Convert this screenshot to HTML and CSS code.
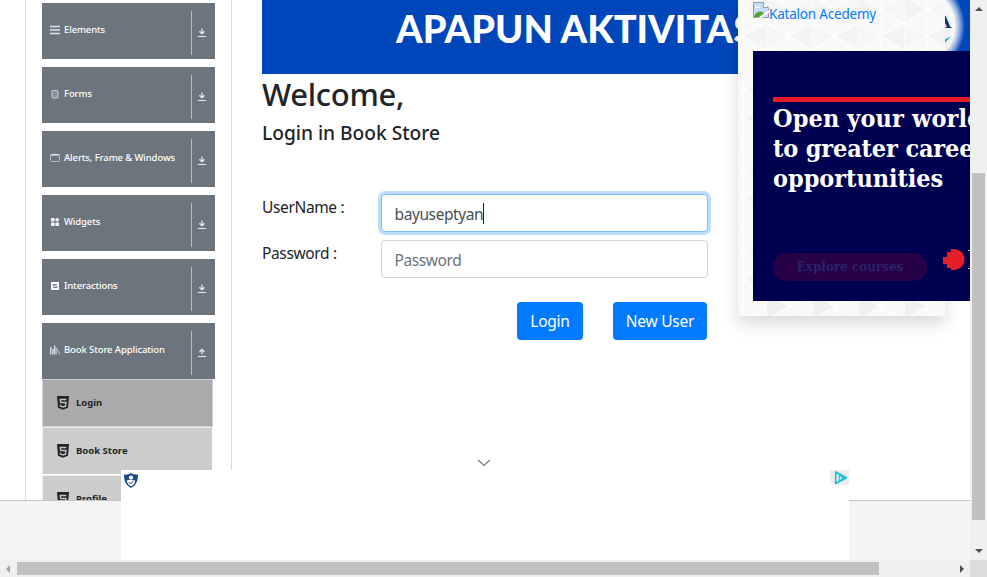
FILE: index.html
```html
<!DOCTYPE html>
<html lang="en">
<head>
<meta charset="utf-8">
<title>Book Store</title>
<link rel="stylesheet" href="styles.css">
</head>
<body>
<svg class="defs" width="0" height="0" aria-hidden="true">
  <symbol id="down" viewBox="0 0 8 9"><path d="M4 .5v5M1.400 3.300 4 5.800l2.600-2.500" fill="none" stroke="currentColor" stroke-width="1.300"/><path d="M0 8.500h8" stroke="currentColor" stroke-width="1"/></symbol>
  <symbol id="up" viewBox="0 0 8 9"><path d="M4 6.500V1.500M1.400 4 4 1.500 6.600 4" fill="none" stroke="currentColor" stroke-width="1.300"/><path d="M0 8.500h8" stroke="currentColor" stroke-width="1"/></symbol>
  <symbol id="html5" viewBox="0 0 12 14"><path d="M0 0h12l-1 11.800L6 13.700l-5-1.900z" fill="currentColor"/><path d="M9.400 3.500H3.300l.3 3h5.300l-.4 3.600-2.500.8-2.500-.8-.1-1.300" fill="none" stroke="#c4c4c4" stroke-width="1.400"/></symbol>
</svg>
<div class="viewport">
  <div class="page">
    <div class="content">
      <aside class="sidebar">
        <div class="group"><svg class="gi" viewBox="0 0 10 10"><path d="M0 1.500h10M0 5h10M0 8.500h10" stroke="#dfe1e3" stroke-width="1.600"/></svg><span class="gt">Elements</span><span class="arrow"><svg><use href="#down"/></svg></span></div>
        <div class="group"><svg class="gi" viewBox="0 0 10 10"><rect x="2" y="1.500" width="6" height="7.500" rx="1" fill="#8b9196" stroke="#cfd2d5"/></svg><span class="gt">Forms</span><span class="arrow"><svg><use href="#down"/></svg></span></div>
        <div class="group"><svg class="gi" viewBox="0 0 10 10"><rect x=".5" y="1.500" width="9" height="7" rx="1" fill="none" stroke="#b9bdc1"/><path d="M1 1.800h8" stroke="#e5e7e8" stroke-width="1.500"/></svg><span class="gt">Alerts, Frame &amp; Windows</span><span class="arrow"><svg><use href="#down"/></svg></span></div>
        <div class="group"><svg class="gi" viewBox="0 0 10 10"><path d="M1 1h3.600v3.600H1zM1 5.400h3.600V9H1zM5.400 5.400H9V9H5.400zM7.200.5l2.200 2.300-2.200 2.300L5 2.800z" fill="#f1f2f3"/></svg><span class="gt">Widgets</span><span class="arrow"><svg><use href="#down"/></svg></span></div>
        <div class="group"><svg class="gi" viewBox="0 0 10 10"><rect x="1" y="1" width="8" height="8" rx=".6" fill="#fff"/><path d="M3 5V3.500h4M7 5v1.500H3M3.500 5h3" stroke="#6c757d" stroke-width=".9" fill="none"/></svg><span class="gt">Interactions</span><span class="arrow"><svg><use href="#down"/></svg></span></div>
        <div class="group open"><svg class="gi" viewBox="0 0 10 10"><path d="M.7 2v7.500M3 4v5.500M4.800.5v9" stroke="#dcdfe1" stroke-width="1.400"/><path d="M3.200 1.500h2M6.300 2.500v7M7 4l2.700 5.500" stroke="#b5babe" stroke-width="1.100"/></svg><span class="gt">Book Store Application</span><span class="arrow"><svg><use href="#up"/></svg></span></div>
        <ul class="menu">
          <li class="item active"><svg><use href="#html5"/></svg><span>Login</span></li>
          <li class="item"><svg><use href="#html5"/></svg><span>Book Store</span></li>
          <li class="item"><svg><use href="#html5"/></svg><span>Profile</span></li>
        </ul>
      </aside>
      <main class="main">
        <div class="banner"><span class="slogan">APAPUN AKTIVITAS</span></div>
        <div class="logo"><span class="logo-a">A</span><span class="logo-tick"></span></div>
        <form class="form">
          <h2>Welcome,</h2>
          <h5>Login in Book Store</h5>
          <div class="row"><label>UserName :</label><div class="input focus"><span>bayuseptyan</span><i></i></div></div>
          <div class="row"><label>Password :</label><div class="input hint"><span>Password</span></div></div>
          <div class="buttons"><button type="button" class="b-login">Login</button><button type="button" class="b-new">New User</button></div>
        </form>
      </main>
    </div>
    <footer class="footer"></footer>
    <section class="panel">
      <svg class="facets" width="207" height="316">
        <defs><pattern id="tri" width="46" height="81" patternUnits="userSpaceOnUse" x="-18" y="-4">
          <rect width="46" height="81" fill="#f9f9f9"/>
          <path d="M0 0 23 13.500 0 27zM23 40.500 46 27v27z" fill="#f4f4f4"/>
          <path d="M0 54 23 67.500 0 81z" fill="#f0f0f0"/>
          <path d="M23 13.500 46 0v27zM0 27 23 40.500 0 54z" fill="#f6f6f6"/>
          <path d="M0 0v81M23 0v81M0 0 46 27M46 0 0 27M0 27 46 54M46 27 0 54M0 54 46 81M46 54 0 81" stroke="#fefefe" stroke-width="1.300"/>
        </pattern></defs>
        <rect width="207" height="316" fill="url(#tri)"/>
      </svg>
      <a class="katalon"><svg class="broken" viewBox="0 0 16 16"><path d="M.5.500h10l5 5v10H.5z" fill="#c9dcf7" stroke="#9b9b9b"/><path d="M10.500.500v5h5" fill="#fff" stroke="#9b9b9b"/><path d="M1 15c1-5 6-7 10-4l-4 4z" fill="#52a535"/><path d="M2 6c0-2 2-2 2.500-1C6 4 7 5 7 6z" fill="#fff"/><path d="m5 16 11-8v2.500L8.500 16z" fill="#fff"/><path d="M10 15.500h5.500V11" fill="none" stroke="#9b9b9b"/></svg><span>Katalon Acedemy</span></a>
      <div class="ad">
        <div class="rule"></div>
        <p class="headline"><span class="line-1">Open your world</span><span class="line-2">to greater career</span><span class="line-3">opportunities</span></p>
        <div class="cta"><span class="explore">Explore courses</span><svg class="burst" viewBox="0 0 27 22"><path d="M8 0h3a10.500 10.500 0 0 1 0 21H8v-2H4v-4H0V8h4V3h4z" fill="#e61e2a"/><path d="M25 1.500h3M25 19.500h3" stroke="#d5d5e5" fill="none"/></svg></div>
      </div>
    </section>
    <svg class="chevron" viewBox="0 0 14 8"><path d="m1 1 6 5.500L13 1" fill="none" stroke="#777" stroke-width="1.100"/></svg>
    <div class="bottom-ad">
      <svg class="shield" viewBox="0 0 14 15"><path d="M7 0c2 1.300 4 1.800 7 1.600C14 8 12 12.500 7 15 2 12.500 0 8 0 1.600 3 1.800 5 1.300 7 0z" fill="#184a80"/><circle cx="7" cy="4.500" r="2.100" fill="#fff"/><path d="M2.800 7.500C4 6.500 10 6.500 11.200 7.500 11 10.500 9.500 12 7 13.200 4.500 12 3 10.500 2.800 7.500z" fill="#fff"/><path d="m4.700 9 2 2 3-3.500" fill="none" stroke="#184a80"/></svg>
      <svg class="choices" viewBox="0 0 19 15"><path d="M0 0h19v15H3.500L0 12z" fill="#ececec"/><path d="M5.700 2v11.500L16.500 7.700z" fill="#ececec" stroke="#16bcdc" stroke-width="1.600" stroke-linejoin="round"/><path d="M9.200 11V5l4.300 2.700-3 1.700" fill="none" stroke="#16bcdc" stroke-width="1.100"/></svg>
    </div>
  </div>
  <div class="vbar"><svg class="tri-up" viewBox="0 0 8 4"><path d="M4 0 8 4H0z"/></svg><div class="vthumb"></div><svg class="tri-down" viewBox="0 0 8 4"><path d="M0 0h8L4 4z"/></svg></div>
  <div class="hbar"><svg class="tri-left" viewBox="0 0 4 8"><path d="M4 0v8L0 4z"/></svg><div class="hthumb"></div><svg class="tri-right" viewBox="0 0 4 8"><path d="M0 0v8l4-4z"/></svg></div>
  <div class="corner"></div>
</div>
</body>
</html>
```
FILE: styles.css
```css
* { box-sizing: border-box; }
body { margin: 0; overflow: hidden; color: #212529; background: #fff; font: 15.500px/24px "Noto Sans", "Open Sans", sans-serif; letter-spacing: -.4px; }
.defs { position: absolute; }
.viewport { display: grid; grid-template: 560px 17px / 970px 17px; width: 987px; height: 577px; }
.page { position: relative; overflow: hidden; }
.content { display: flex; height: 500px; overflow: hidden; }
.footer { height: 60px; background: #f4f4f4; border-top: 1px solid #c6c6c6; }

.sidebar { flex: none; width: 207px; margin-left: 25px; padding: 3px 16px 0; border: solid #ddd; border-width: 0 1px; letter-spacing: 0; }
.group { display: flex; align-items: flex-start; width: 173px; height: 56px; margin-bottom: 8px; padding: 8px 9px 0 8px; background: #6c757d; color: #fff; font-size: 9.500px; font-weight: 500; letter-spacing: -.11px; line-height: 38px; white-space: nowrap; }
.group.open { margin-bottom: 0; }
.gi { flex: none; width: 10px; height: 10px; margin: 14px 4px 0 0; }
.arrow { display: flex; flex: none; align-items: flex-start; width: 15px; height: 44px; margin-left: auto; padding: 17px 0 0 6px; border-left: 1px solid #b8bcc0; color: #e4e6e8; }
.arrow svg { flex: none; width: 8px; height: 9px; }
.menu { width: 171px; margin: 0; padding: 0; list-style: none; }
.item { display: flex; align-items: center; gap: 7px; width: 170px; height: 47px; margin-bottom: 1px; padding-left: 14px; background: #ccc; border: 1px solid #ccc; border-left-color: #f2f2f2; border-top-color: #eee; font-size: 9.500px; font-weight: 700; }
.item.active { width: 171px; height: 48px; margin-bottom: 0; background: #aaa; border-color: #cdd1d9; }
.item svg { width: 12px; height: 14px; }

.main { position: relative; flex: none; width: 738px; padding-left: 30px; }
.banner { height: 74px; overflow: hidden; background: #0046bb; color: #fff; white-space: nowrap; }
.slogan { display: block; margin: 5px 0 0 134px; font: 900 38px/46px Lato, sans-serif; letter-spacing: 0; }
.logo { position: absolute; left: 651px; top: -20px; width: 82px; height: 92px; border-radius: 50%; background: radial-gradient(closest-side, #fff 74%, rgba(255,255,255,.6) 86%, rgba(255,255,255,0)); }
.logo-a { position: absolute; left: 55px; top: 30px; color: #123775; font: 700 17px/24px "DejaVu Serif", serif; }
.logo-tick { position: absolute; left: 59px; top: 56px; width: 9px; height: 7px; background: #0faee0; clip-path: polygon(0 40%, 35% 50%, 100% 0, 30% 100%, 0 100%); }
.form { width: 446px; }
h2 { margin: 1px 0 9px; font-size: 31px; line-height: 38px; font-weight: 500; letter-spacing: -.3px; }
h5 { margin: 0 0 49px; font-size: 19.200px; line-height: 22px; padding-bottom: 2px; font-weight: 500; letter-spacing: -.02px; }
.row { display: flex; align-items: flex-start; justify-content: space-between; height: 38px; margin-bottom: 8px; }
.row:first-of-type { margin-top: -1px; }
label { line-height: 26px; white-space: nowrap; letter-spacing: -.36px; }
.input { display: flex; align-items: center; width: 327px; height: 38px; padding: 2px 12px 0 12.500px; border: 1px solid #ced4da; border-radius: 4px; background: #fff; color: #495057; white-space: nowrap; }
.input.focus { border-color: #80bdff; box-shadow: 0 0 0 3px #bfdeff; }
.input.focus i { width: 1px; height: 21px; background: #222; margin-top: -2px; }
.input.hint { color: #6c757d; }
.buttons { display: flex; justify-content: flex-end; gap: 30px; padding: 16px 1px 0 0; }
button { width: 66px; height: 38px; padding: 0; border: 0; border-radius: 4px; background: #007bff; color: #fff; font: inherit; letter-spacing: -.25px; white-space: nowrap; }
.b-new { width: 94px; }

.panel { position: absolute; left: 738px; top: 0; width: 207px; height: 316px; padding: 2px 15px 15px; box-shadow: 0 8px 16px rgba(0,0,0,.15); }
.facets { position: absolute; left: 0; top: 0; }
.katalon { position: relative; display: flex; height: 49px; color: #007bff; font-size: 13.500px; line-height: 25px; letter-spacing: -.2px; white-space: nowrap; }
.katalon svg { flex: none; width: 16px; height: 16px; }
.ad { position: relative; width: 300px; height: 250px; padding: 46px 0 0 20px; background: #000051; color: #fff; letter-spacing: 0; }
.rule { height: 5px; background: #e61e2a; }
.headline { margin: 2px 0 0; font: 700 25px/30px "DejaVu Serif Condensed", "DejaVu Serif", serif; white-space: nowrap; }
.headline span { display: block; }
.line-1 { letter-spacing: .1px; }
.line-2 { letter-spacing: -.15px; }
.line-3 { letter-spacing: -.05px; }
.cta { display: flex; gap: 16px; margin-top: 59px; }
.explore { width: 154px; height: 28px; border-radius: 14px; background: #280047; color: #282568; text-align: center; font: 700 13px/28px "DejaVu Serif Condensed", "DejaVu Serif", serif; letter-spacing: .15px; white-space: nowrap; }
.burst { width: 27px; height: 22px; margin-top: -4px; }

.chevron { position: absolute; left: 476.500px; top: 459px; width: 14px; height: 8px; }
.bottom-ad { position: absolute; left: 121px; top: 470px; display: flex; justify-content: space-between; width: 728px; height: 90px; background: #fff; }
.shield { width: 14px; height: 15px; margin: 3px 0 0 3px; }
.choices { width: 19px; height: 15px; }

.vbar { display: flex; flex-direction: column; align-items: center; background: #f0f0f0; fill: #505050; }
.tri-up { width: 8px; height: 4px; margin-top: 7px; }
.vthumb { width: 13px; height: 347px; margin-top: 162px; background: #c1c1c1; }
.tri-down { width: 8px; height: 4px; margin-top: 29px; }
.hbar { display: flex; align-items: center; background: #f0f0f0; fill: #505050; }
.tri-left { width: 4px; height: 8px; margin-left: 6px; fill: #a3a3a3; }
.hthumb { width: 862px; height: 13px; margin-left: 7px; background: #c1c1c1; }
.tri-right { width: 4px; height: 8px; margin-left: 81px; }
.corner { background: #dcdcdc; }
```
